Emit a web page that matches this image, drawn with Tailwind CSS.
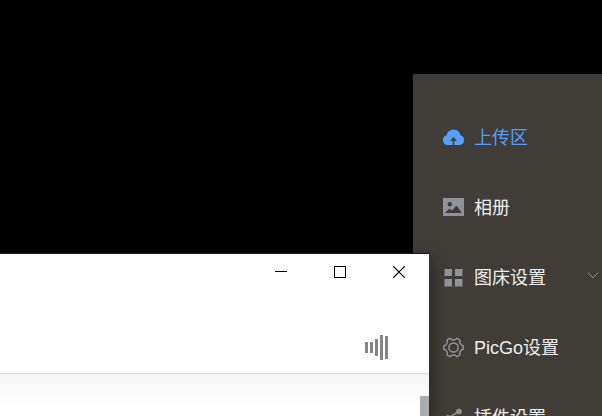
<!DOCTYPE html>
<html lang="zh-CN">
<head>
<meta charset="utf-8">
<meta name="viewport" content="width=device-width, initial-scale=1">
<title>PicGo</title>
<script src="https://cdn.jsdelivr.net/npm/@tailwindcss/browser@4"></script>
</head>
<body class="bg-black font-['Liberation_Sans','Noto_Sans_CJK_SC',sans-serif]">
<main class="relative h-screen overflow-hidden bg-black">
  <!-- PicGo window -->
  <aside class="absolute top-[74px] right-0 bottom-0 left-[413px] overflow-hidden bg-[#403c37] pt-7">
    <nav>
      <ul class="text-lg text-[#eeeeee]">
        <li><a href="#upload" class="flex h-[70px] items-center gap-2.5 pl-[30px] text-[#579eff]">
          <svg class="size-[21px] shrink-0" viewBox="0 0 21 21" fill="currentColor" aria-hidden="true"><path fill-rule="evenodd" d="M5 18A5 5 0 0 1 3.600 8.200A7 7 0 0 1 17.400 8.200A5 5 0 0 1 16 18H11.300V14H13.700L10.500 9.700L7.300 14H9.700V18Z"/></svg>
          <span class="pt-0.5">上传区</span></a></li>
        <li><a href="#gallery" class="flex h-[70px] items-center gap-2.5 pl-[30px]">
          <svg class="size-[21px] shrink-0 text-[#909399]" viewBox="0 0 21 21" fill="currentColor" aria-hidden="true"><path fill-rule="evenodd" d="M0 1H21V19H0ZM6.800 5A2.300 2.300 0 1 0 6.800 9.600A2.300 2.300 0 1 0 6.800 5ZM2 16H19L13.500 8.500L9 13.500L6.200 11.500Z"/></svg>
          <span class="pt-0.5">相册</span></a></li>
        <li><button type="button" aria-expanded="false" class="flex h-[70px] w-full items-center gap-2.5 pl-[30px]">
          <svg class="size-[21px] shrink-0 text-[#909399]" viewBox="0 0 21 21" fill="currentColor" aria-hidden="true"><path d="M1.500 2h7.500v7H1.500zM12 2h7.500v7H12zM1.500 12h7.500v7.500H1.500zM12 12h7.500v7.500H12z"/></svg>
          <span class="pt-0.5">图床设置</span>
          <svg class="mr-[3px] mb-1 ml-auto size-3 shrink-0 text-[#909399]" viewBox="0 0 12 12" fill="none" stroke="currentColor" aria-hidden="true"><path d="M.8 3.500L6 8.700L11.200 3.500"/></svg>
        </button></li>
        <li><a href="#settings" class="flex h-[70px] items-center gap-2.5 pl-[30px]">
          <svg class="size-[21px] shrink-0 text-[#909399]" viewBox="0 0 21 21" fill="none" stroke="currentColor" stroke-width="1.500" stroke-linejoin="round" aria-hidden="true"><path d="M7.200 1.200L8.400 2.500Q10.500 3.300 12.600 2.500L13.800 1.200L17 3.100L16.600 4.800Q17 7.200 18.700 8.200L20.200 8.700V12.300L18.700 12.800Q17 13.800 16.600 16.200L17 17.900L13.800 19.800L12.600 18.500Q10.500 17.700 8.400 18.500L7.200 19.800L4 17.900L4.400 16.200Q4 13.800 2.300 12.800L.8 12.300V8.700L2.300 8.200Q4 7.200 4.400 4.800L4 3.100Z"/><circle cx="10.500" cy="10.500" r="4.600"/></svg>
          <span class="pt-0.5">PicGo设置</span></a></li>
        <li><a href="#plugins" class="flex h-[70px] items-center gap-2.5 pl-[30px]">
          <svg class="size-[21px] shrink-0 text-[#909399]" viewBox="0 0 21 21" fill="currentColor" stroke="currentColor" aria-hidden="true"><path d="M16 4.500L5 11L16 17.500" fill="none" stroke-width="1.500"/><circle cx="16" cy="4.500" r="2.500"/><circle cx="5" cy="11" r="2.500"/><circle cx="16" cy="17.500" r="2.500"/></svg>
          <span class="pt-0.5">插件设置</span></a></li>
      </ul>
    </nav>
  </aside>

  <!-- Foreground window -->
  <section class="absolute top-[253px] bottom-0 left-0 flex w-[429px] flex-col border-t border-[#1c1c1c] bg-white shadow-[3px_6px_14px_0px_rgba(0,0,0,0.35)]">
    <header class="border-b border-[#dddddd] pb-[13px]">
      <div class="flex h-9 justify-end pr-px text-black">
        <button type="button" aria-label="最小化" class="flex w-[59px] items-center justify-center"><svg class="size-3" viewBox="0 0 12 12" fill="none" stroke="currentColor" shape-rendering="crispEdges"><path d="M0 5.500H12"/></svg></button>
        <button type="button" aria-label="最大化" class="flex w-[59px] items-center justify-center"><svg class="size-3" viewBox="0 0 12 12" fill="none" stroke="currentColor" shape-rendering="crispEdges"><path d="M.5 .5H11.500V11.500H.5Z"/></svg></button>
        <button type="button" aria-label="关闭" class="flex w-[59px] items-center justify-center"><svg class="size-3" viewBox="0 0 12 12" fill="none" stroke="currentColor" stroke-width="1.200"><path d="M.2 .2L11.800 11.800M11.800 .2L.2 11.800"/></svg></button>
      </div>
      <div class="flex justify-end pt-11 pr-10">
        <button type="button" aria-label="音频"><svg class="h-[26px] w-6" viewBox="0 0 24 26" fill="#858585"><path d="M0 8h3v11H0zM5 8h3v11H5zM10 5h3v17h-3zM15 1h3v25h-3zM20 2h3v23h-3z"/></svg></button>
      </div>
    </header>
    <div class="flex flex-1 items-end justify-end bg-linear-to-b from-[#f5f5f5] to-white to-80%">
      <div class="h-5 w-[9px] bg-[#aaacae]"></div>
    </div>
  </section>
</main>
</body>
</html>
